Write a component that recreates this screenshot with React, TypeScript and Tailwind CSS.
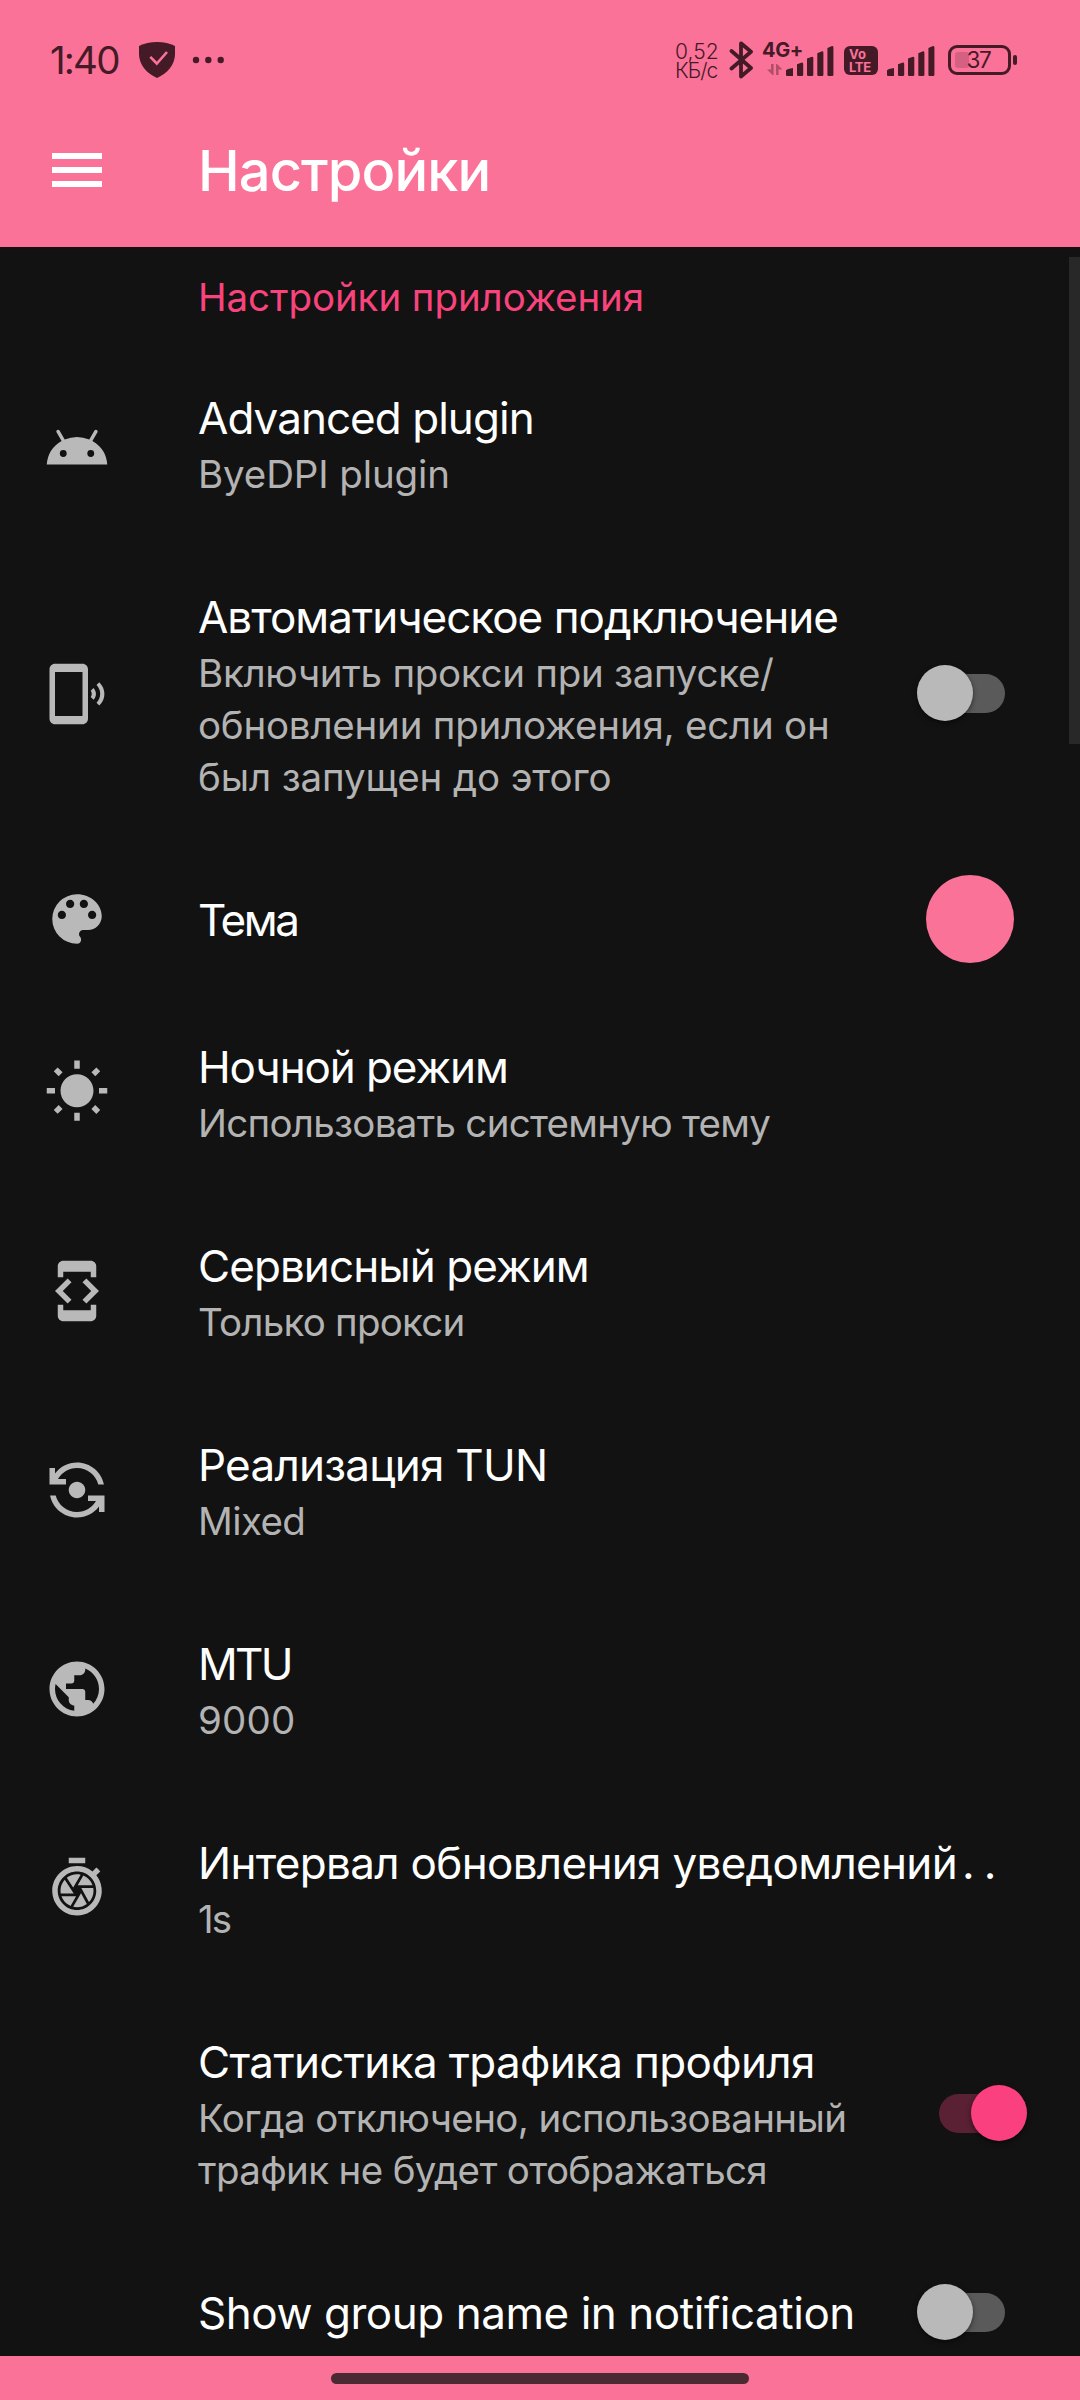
import React from 'react';
import {
  MdAndroid,
  MdColorLens,
  MdDeveloperMode,
  MdFlipCameraAndroid,
  MdPhonelinkRing,
  MdPublic,
  MdShutterSpeed,
  MdWbSunny,
} from 'react-icons/md';

const SIGNAL_BARS = [
  'M0 24.2 L2 22.9 L7 22 V29.5 Q7 30 6.5 30 H1 Q0 30 0 29 Z',
  'M11 18.3 L16 16.6 Q17.2 16.6 17.2 18 V28.8 Q17.2 30 16 30 H12.2 Q11 30 11 28.8 Z',
  'M21 12.6 L26 10.7 Q27.3 10.7 27.3 12 V28.8 Q27.3 30 26 30 H22.2 Q21 30 21 28.8 Z',
  'M31.3 7.2 L36 5.3 Q37.4 5.3 37.4 6.6 V28.8 Q37.4 30 36.2 30 H32.5 Q31.3 30 31.3 28.8 Z',
  'M41.4 2 L46 0 Q47.4 0 47.4 1.3 V28.8 Q47.4 30 46.2 30 H42.6 Q41.4 30 41.4 28.8 Z',
];

function Signal() {
  return (
    <svg width="48" height="30" viewBox="0 0 48 30" fill="currentColor">
      {SIGNAL_BARS.map((d) => (
        <path key={d} d={d} />
      ))}
    </svg>
  );
}

function StatusBar() {
  return (
    <div className="flex h-[120px] items-start text-[#451a27]">
      <span className="ml-[50px] mt-[36px] w-[89px] text-[38.5px] leading-[48px] tracking-[-1.83px]">1:40</span>
      <svg className="mt-[42px]" width="36" height="36" viewBox="0 0 36 36">
        <path d="M18 0 C25 0 30.5 1.2 36 4 V12 C36 22.500 28.500 31.500 18 36 C7.500 31.500 0 22.500 0 12 V4 C5.500 1.200 11 0 18 0 Z" fill="currentColor" />
        <path d="M11.300 14.800 L17.800 21.500 L28 10" fill="none" stroke="#fb7299" strokeWidth="2.600" />
      </svg>
      <svg className="ml-[17px] mt-[56px]" width="34" height="8" viewBox="0 0 34 8" fill="currentColor">
        <circle cx="4" cy="4" r="3.200" />
        <circle cx="16.300" cy="4" r="3.200" />
        <circle cx="28.700" cy="4" r="3.200" />
      </svg>
      <div className="ml-auto flex items-start">
        <div className="mt-[43px] flex w-[54px] flex-col text-[21px] font-light leading-[18.5px]">
          <span className="tracking-[0.1px]">0,52</span>
          <span className="tracking-[-1px]">КБ/с</span>
        </div>
        <svg className="mt-[40px]" width="26" height="40" viewBox="0 0 26 40" fill="none" stroke="currentColor" strokeWidth="3.800" strokeLinejoin="round" strokeLinecap="round">
          <path d="M2.500 11 L22 28 L12 36.500 V3.300 L22 11.800 L2.500 28.500" />
        </svg>
        <div className="relative ml-[31px] mt-[46px] h-[30px] w-[48px]">
          <Signal />
          <span className="absolute left-[-24px] top-[-8px] text-[20px] font-bold leading-[25px] tracking-[-0.4px]">4G+</span>
          <svg className="absolute left-[-19px] top-[18px] opacity-40" width="16" height="11" viewBox="0 0 16 11" fill="currentColor">
            <path d="M4 0 H6.600 V11 H5.500 L0 5.500 H4 Z" />
            <path d="M9 0 H10 L15.500 5.500 H11.600 V11 H9 Z" />
          </svg>
        </div>
        <div className="ml-[10px] mt-[46px] flex h-[29px] w-[34px] flex-col justify-center rounded-[6px] bg-[#451a27] pl-[5px] text-[13px] font-bold leading-[12.500px] text-[#fb7299]">
          <span>Vo</span>
          <span className="tracking-[-0.3px]">LTE</span>
        </div>
        <div className="ml-[9px] mt-[46px]">
          <Signal />
        </div>
        <div className="relative ml-[13px] mt-[45px] flex h-[30px] w-[63px] items-center justify-center rounded-[9px] border-[3px] border-[#451a27]">
          <div className="absolute left-[4px] top-[4px] h-[16px] w-[14px] rounded-[3px] bg-[#451a27]/20" />
          <span className="relative right-[1px] text-[22.500px] leading-[24px] tracking-[-1.200px]">37</span>
        </div>
        <div className="ml-[2px] mr-[63px] mt-[55px] h-[10px] w-[4px] rounded-[2px] bg-[#451a27]" />
      </div>
    </div>
  );
}

function Toggle({ on = false }: { on?: boolean }) {
  if (on) {
    return (
      <div className="flex h-[56px] w-[88px] items-center">
        <div className="h-[39px] w-[60px] rounded-l-full bg-[#5a2034]" />
        <div className="-ml-[28px] h-[56px] w-[56px] shrink-0 rounded-full bg-[#fb407f] shadow-[0_2px_5px_rgba(0,0,0,0.5)]" />
      </div>
    );
  }
  return (
    <div className="flex h-[56px] w-[88px] items-center">
      <div className="relative h-[56px] w-[56px] shrink-0 rounded-full bg-[#b9b9b9] shadow-[0_2px_5px_rgba(0,0,0,0.5)]" />
      <div className="-ml-[28px] h-[39px] w-[60px] rounded-r-full bg-[#5a5a5a]" />
    </div>
  );
}

type Line = { text: string; track: string };

type Row = {
  title: Line;
  summary?: Line[];
  height: string;
  icon?: React.ReactNode;
  iconPad?: string;
  control?: React.ReactNode;
  dots?: boolean;
};

const ICON = 'h-[66px] w-[66px]';

const ROWS: Row[] = [
  {
    title: { text: 'Advanced plugin', track: 'tracking-[-0.96px]' },
    summary: [{ text: 'ByeDPI plugin', track: 'tracking-[-0.12px]' }],
    height: 'h-[199px]',
    icon: <MdAndroid className={ICON} />,
    iconPad: 'pt-[59px]',
  },
  {
    title: { text: 'Автоматическое подключение', track: 'tracking-[-1px]' },
    summary: [
      { text: 'Включить прокси при запуске/', track: 'tracking-[-0.28px]' },
      { text: 'обновлении приложения, если он', track: 'tracking-[-0.22px]' },
      { text: 'был запущен до этого', track: 'tracking-[-0.12px]' },
    ],
    height: 'h-[303px]',
    icon: <MdPhonelinkRing className={ICON} />,
    iconPad: 'pt-[106px]',
    control: (
      <div className="pr-[75px] pt-[110px]">
        <Toggle />
      </div>
    ),
  },
  {
    title: { text: 'Тема', track: 'tracking-[-2.4px]' },
    height: 'h-[147px]',
    icon: <MdColorLens className={ICON} />,
    iconPad: 'pt-[28px]',
    control: (
      <div className="pr-[66px] pt-[17px]">
        <div className="h-[88px] w-[88px] rounded-full bg-[#fb7299]" />
      </div>
    ),
  },
  {
    title: { text: 'Ночной режим', track: 'tracking-[-1.1px]' },
    summary: [{ text: 'Использовать системную тему', track: 'tracking-[-0.72px]' }],
    height: 'h-[199px]',
    icon: <MdWbSunny className={ICON} />,
    iconPad: 'pt-[54px]',
  },
  {
    title: { text: 'Сервисный режим', track: 'tracking-[-0.93px]' },
    summary: [{ text: 'Только прокси', track: 'tracking-[-0.78px]' }],
    height: 'h-[199px]',
    icon: <MdDeveloperMode className={ICON} />,
    iconPad: 'pt-[54px]',
  },
  {
    title: { text: 'Реализация TUN', track: 'tracking-[-0.75px]' },
    summary: [{ text: 'Mixed', track: 'tracking-[-0.6px]' }],
    height: 'h-[199px]',
    icon: <MdFlipCameraAndroid className={ICON} />,
    iconPad: 'pt-[54px]',
  },
  {
    title: { text: 'MTU', track: 'tracking-[-2.65px]' },
    summary: [{ text: '9000', track: 'tracking-[0.2px]' }],
    height: 'h-[199px]',
    icon: <MdPublic className={ICON} />,
    iconPad: 'pt-[54px]',
  },
  {
    title: { text: 'Интервал обновления уведомлений', track: 'tracking-[-0.69px]' },
    summary: [{ text: '1s', track: 'tracking-[-1.9px]' }],
    height: 'h-[199px]',
    icon: <MdShutterSpeed className={ICON} />,
    iconPad: 'pt-[54px]',
    dots: true,
  },
  {
    title: { text: 'Статистика трафика профиля', track: 'tracking-[-0.65px]' },
    summary: [
      { text: 'Когда отключено, использованный', track: 'tracking-[-0.6px]' },
      { text: 'трафик не будет отображаться', track: 'tracking-[-0.65px]' },
    ],
    height: 'h-[251px]',
    control: (
      <div className="pr-[53px] pt-[85px]">
        <Toggle on />
      </div>
    ),
  },
  {
    title: { text: 'Show group name in notification', track: 'tracking-[-0.46px]' },
    height: 'h-[105px]',
    control: (
      <div className="pr-[75px] pt-[33px]">
        <Toggle />
      </div>
    ),
  },
];

function SettingRow({ row }: { row: Row }) {
  return (
    <div className={`flex shrink-0 items-start ${row.height}`}>
      <div className={`w-[198px] shrink-0 pl-[44px] text-[#b9b9b9] ${row.iconPad ?? ''}`}>{row.icon}</div>
      <div className="flex-1 whitespace-nowrap pt-[34px]">
        <div className={`text-[44px] leading-[56px] text-white ${row.title.track}`}>
          {row.title.text}
          {row.dots && <span className="pl-[5px] tracking-[9px]">..</span>}
        </div>
        <div className="mt-[2px]">
          {row.summary?.map((line) => (
            <div key={line.text} className={`text-[38.5px] leading-[52px] text-[#b3b3b3] ${line.track}`}>
              {line.text}
            </div>
          ))}
        </div>
      </div>
      {row.control}
    </div>
  );
}

export default function App() {
  return (
    <div className="relative flex h-[2400px] w-[1080px] flex-col overflow-hidden bg-[#121212] font-['Inter',sans-serif]">
      <header className="h-[247px] shrink-0 bg-[#fb7299]">
        <StatusBar />
        <div className="flex items-start">
          <div className="ml-[52px] mt-[33px] flex w-[50px] flex-col gap-[8px]">
            <div className="h-[6px] bg-white" />
            <div className="h-[6px] bg-white" />
            <div className="h-[6px] bg-white" />
          </div>
          <h1 className="ml-[96px] mt-[19px] text-[56px] font-[450] leading-[64px] tracking-[-0.9px] text-white">
            Настройки
          </h1>
        </div>
      </header>
      <main className="flex h-[2109px] shrink-0 flex-col overflow-hidden">
        <h2 className="mb-[33px] pl-[198px] pt-[24px] text-[38.5px] leading-[52px] tracking-[-0.08px] text-[#f8437d]">
          Настройки приложения
        </h2>
        {ROWS.map((row) => (
          <SettingRow key={row.title.text} row={row} />
        ))}
      </main>
      <footer className="flex h-[44px] shrink-0 justify-center bg-[#fb7299] pt-[17px]">
        <div className="h-[11px] w-[418px] rounded-full bg-[#4a2932]" />
      </footer>
      <div className="absolute right-0 top-[257px] h-[487px] w-[11px] bg-[#282828]" />
    </div>
  );
}
